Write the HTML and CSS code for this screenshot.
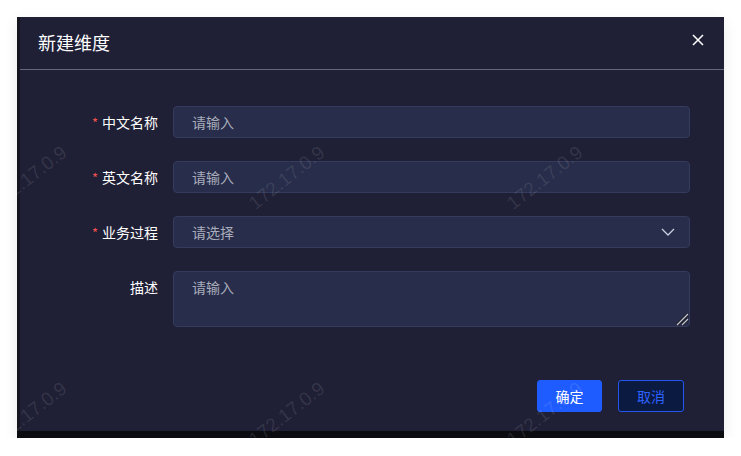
FILE: index.html
```html
<!DOCTYPE html>
<html lang="zh">
<head>
<meta charset="utf-8">
<title>新建维度</title>
<link rel="stylesheet" href="styles.css">
</head>
<body>
<div class="stage">
  <div class="modal">
    <div class="modal-header">
      <span class="modal-title">新建维度</span>
      <button class="close-btn" aria-label="关闭">
        <svg width="12" height="12" viewBox="0 0 12 12"><path d="M1 1L11 11M11 1L1 11" stroke="#ffffff" stroke-width="1.5" fill="none"/></svg>
      </button>
    </div>
    <div class="modal-body">
      <form class="form">
        <label class="form-label"><span class="req">*</span>中文名称</label>
        <input class="input" type="text" placeholder="请输入">
        <label class="form-label"><span class="req">*</span>英文名称</label>
        <input class="input" type="text" placeholder="请输入">
        <label class="form-label"><span class="req">*</span>业务过程</label>
        <div class="input select">
          <span class="placeholder">请选择</span>
          <svg width="14" height="8" viewBox="0 0 14 8"><path d="M1 1L7 7L13 1" stroke="#c9cde0" stroke-width="1.3" fill="none"/></svg>
        </div>
        <label class="form-label">描述</label>
        <div class="textarea-wrap">
          <textarea class="input textarea" placeholder="请输入"></textarea>
          <svg class="grip" width="14" height="14" viewBox="0 0 14 14">
            <path d="M2 13L13 2M7 13L13 7" stroke="#1a1b24" stroke-width="3" fill="none"/>
            <path d="M2 13L13 2M7 13L13 7" stroke="#c4c6cf" stroke-width="1.3" fill="none"/>
          </svg>
        </div>
      </form>
    </div>
    <div class="modal-footer">
      <button class="btn btn-primary">确定</button>
      <button class="btn btn-ghost">取消</button>
    </div>
  </div>
  <div class="watermarks">
    <span class="wm wm1">172.17.0.9</span>
    <span class="wm wm2">172.17.0.9</span>
    <span class="wm wm3">172.17.0.9</span>
    <span class="wm wm4">172.17.0.9</span>
    <span class="wm wm5">172.17.0.9</span>
    <span class="wm wm6">172.17.0.9</span>
  </div>
</div>
</body>
</html>
```

FILE: styles.css
```css
html, body {
  margin: 0;
  padding: 0;
  background: #ffffff;
}
body {
  padding: 17px 17px 0 17px;
  font-family: "Noto Sans CJK SC", "Noto Sans", sans-serif;
}
.stage {
  position: relative;
  width: 707px;
  height: 421px;
  background: #0b0c10;
  box-shadow: 0 4px 14px rgba(0, 0, 0, 0.08);
  overflow: hidden;
}
.modal {
  height: 414px;
  background: #1f2036;
  border-left: 3px solid #15161f;
  display: flex;
  flex-direction: column;
}
.modal-header {
  height: 52px;
  border-bottom: 1px solid #64677a;
  display: flex;
  align-items: center;
  justify-content: space-between;
  padding: 0 18px 0 18px;
}
.modal-title {
  color: #ffffff;
  font-size: 18px;
  line-height: 24px;
  margin-top: -2px;
}
.close-btn {
  background: none;
  border: 0;
  padding: 0;
  width: 14px;
  height: 14px;
  display: flex;
  align-items: center;
  justify-content: center;
  margin-top: -6px;
  margin-right: 1px;
}
.modal-body {
  padding: 36px 34px 0 0;
}
.form {
  display: grid;
  grid-template-columns: 138px 1fr;
  grid-auto-rows: auto;
  column-gap: 15px;
  row-gap: 23px;
  margin: 0;
}
.form-label {
  display: block;
  height: 32px;
  overflow: hidden;
  color: #ffffff;
  font-size: 14px;
  line-height: 32px;
  text-align: right;
  font-weight: 400;
}
.req {
  color: #f0524f;
  margin-right: 4px;
  font-size: 13px;
  line-height: 1;
  vertical-align: top;
  display: inline-block;
  padding-top: 10px;
}
.input {
  box-sizing: border-box;
  height: 32px;
  width: 100%;
  background: #272d4a;
  border: 1px solid #343b5d;
  border-radius: 4px;
  padding: 0 18px;
  color: #e0e2ec;
  font-family: "Noto Sans CJK SC", "Noto Sans", sans-serif;
  font-size: 14px;
  outline: none;
}
.input::placeholder,
.placeholder {
  color: #a9acbb;
}
.select {
  display: flex;
  align-items: center;
  justify-content: space-between;
  padding-right: 14px;
}
.textarea-wrap {
  position: relative;
  height: 56px;
}
.textarea {
  display: block;
  height: 56px;
  padding: 5px 18px;
  line-height: 20px;
  resize: none;
}
.grip {
  position: absolute;
  right: 1px;
  bottom: 1px;
}
.modal-footer {
  margin-top: auto;
  display: flex;
  justify-content: flex-end;
  gap: 16px;
  padding: 0 40px 19px 0;
}
.btn {
  box-sizing: border-box;
  height: 32px;
  width: 65px;
  border-radius: 3px;
  font-family: "Noto Sans CJK SC", "Noto Sans", sans-serif;
  font-size: 14px;
  cursor: pointer;
}
.btn-primary {
  background: #1f5cff;
  border: 1px solid #1f5cff;
  color: #ffffff;
}
.btn-ghost {
  width: 66px;
  background: #0b1a40;
  border: 1px solid #2256ee;
  color: #2d62ff;
}
.watermarks {
  position: absolute;
  inset: 0;
  pointer-events: none;
}
.wm {
  position: absolute;
  font-family: "Liberation Sans", Arial, sans-serif;
  font-size: 19px;
  color: rgba(255, 255, 255, 0.1);
  white-space: nowrap;
  transform: translate(-50%, -50%) rotate(-38deg);
}
.wm1 { left: 12px; top: 161px; }
.wm2 { left: 270px; top: 161px; }
.wm3 { left: 528px; top: 161px; }
.wm4 { left: 12px; top: 397px; }
.wm5 { left: 270px; top: 397px; }
.wm6 { left: 528px; top: 397px; }
```
